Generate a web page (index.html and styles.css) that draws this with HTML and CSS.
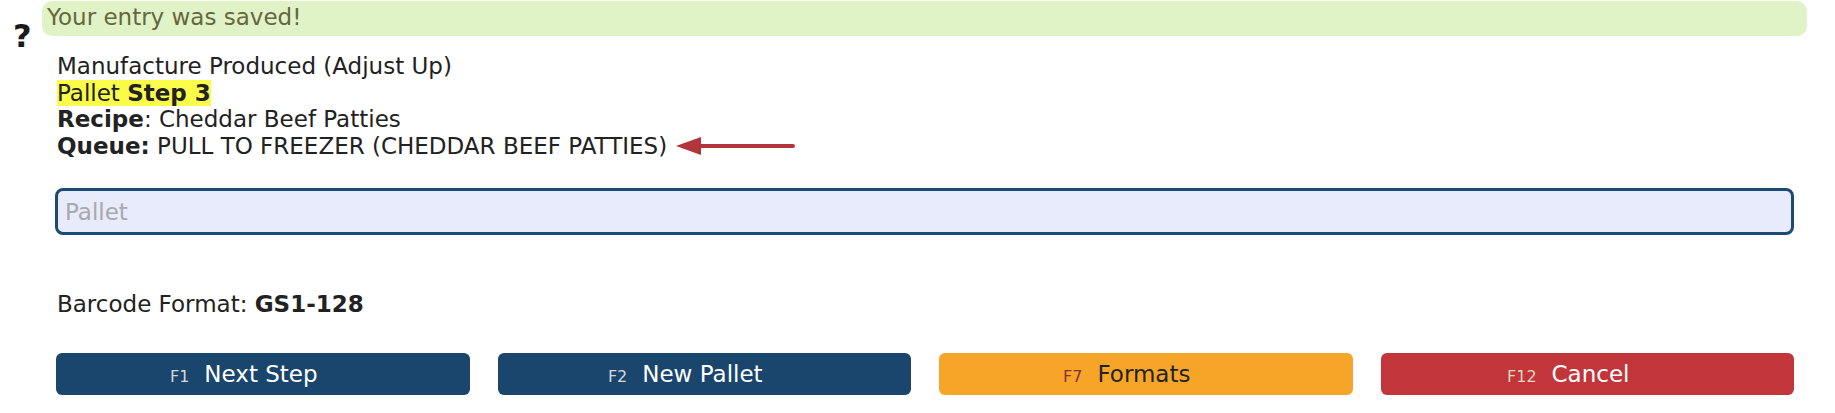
FILE: index.html
```html
<!DOCTYPE html>
<html lang="en">
  <head>
    <title>Manufacture Produced</title>
    <meta charset="utf-8">
    <link rel="stylesheet" href="styles.css">
  </head>
  <body>

  <div class="page">
    <div class="help">?</div>

    <div class="main">
      <div class="flash">Your entry was saved!</div>

      <div class="content">
        <div class="info">
          <div>Manufacture Produced (Adjust Up)</div>
          <div><span class="step">Pallet <b>Step 3</b></span></div>
          <div><b>Recipe</b>: Cheddar Beef Patties</div>
          <div class="queue">
            <span><b>Queue:</b> PULL TO FREEZER (CHEDDAR BEEF PATTIES)</span>
            <svg class="arrow" width="122" height="22" viewBox="0 0 122 22">
              <line x1="20" y1="11" x2="118" y2="11" stroke="#b3343a" stroke-width="4" stroke-linecap="round"/>
              <polygon points="1,11 26,2 26,20" fill="#b3343a"/>
            </svg>
          </div>
        </div>

        <input class="scan" type="text" placeholder="Pallet">

        <div class="format">Barcode Format: <b>GS1-128</b></div>

        <div class="buttons">
          <button class="btn btn-blue"><span class="key">F1</span>Next Step</button>
          <button class="btn btn-blue"><span class="key">F2</span>New Pallet</button>
          <button class="btn btn-orange"><span class="key">F7</span>Formats</button>
          <button class="btn btn-red"><span class="key">F12</span>Cancel</button>
        </div>
      </div>
    </div>
  </div>

  </body>
</html>
```

FILE: styles.css
```css
html {
  height: 100%;
}
body {
  margin: 0;
  padding: 0;
  background: #ffffff;
  color: #222222;
  font-family: "DejaVu Sans", Verdana, sans-serif;
  font-size: 23px;
  line-height: 26.5px;
}

.page {
  display: flex;
  padding: 1px 28px 0 0;
}

.help {
  width: 42px;
  flex: none;
  box-sizing: border-box;
  padding: 22px 0 0 13px;
  font-size: 32px;
  line-height: 26px;
  font-weight: bold;
  color: #1a1a1a;
}

.main {
  flex: 1;
}

.flash {
  height: 35px;
  line-height: 33px;
  padding: 0 5px;
  background-color: #e0f3c6;
  border-radius: 10px;
  color: #66663f;
}

.content {
  padding: 17px 13px 0 13px;
}

.info {
  padding-left: 2px;
}

.step {
  background-color: #fbfb4a;
}

.queue {
  display: flex;
  align-items: center;
}

.arrow {
  margin-left: 8px;
}

.scan {
  display: block;
  box-sizing: border-box;
  width: 100%;
  height: 47px;
  margin-top: 29px;
  padding: 0 7px;
  background-color: #e7ebfc;
  border: 3px solid #1c4a72;
  border-radius: 8px;
  font-family: "DejaVu Sans", Verdana, sans-serif;
  font-size: 23px;
  color: #222222;
  outline: none;
}
.scan::placeholder {
  color: #a9a9a9;
}

.format {
  margin-top: 56px;
  padding-left: 2px;
}

.buttons {
  display: grid;
  grid-template-columns: repeat(4, 1fr);
  gap: 28px;
  margin-top: 35px;
  padding-left: 1px;
}

.btn {
  height: 42px;
  padding: 0 38px 0 0;
  border: none;
  border-radius: 6px;
  font-family: "DejaVu Sans", Verdana, sans-serif;
  font-size: 23px;
  color: #ffffff;
  cursor: pointer;
}
.btn .key {
  font-size: 16px;
  margin-right: 15px;
  color: #d8d8d8;
}

.btn-blue {
  background-color: #1a456d;
}
.btn-orange {
  background-color: #f6a528;
  color: #222222;
}
.btn-orange .key {
  color: #8b2f2f;
}
.btn-red {
  background-color: #c2353b;
}
.btn-red .key {
  color: #e6d6c0;
}
```
